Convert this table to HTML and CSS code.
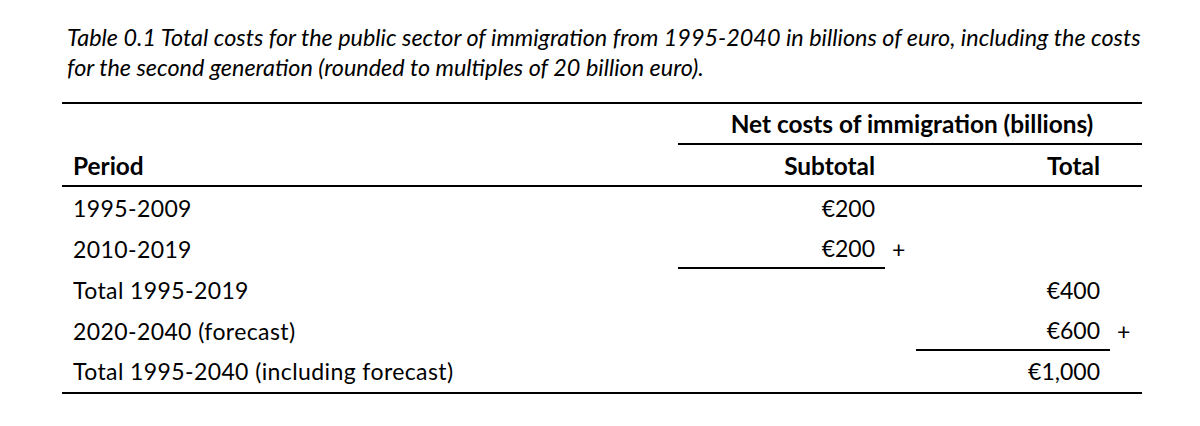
FILE: index.html
```html
<!DOCTYPE html>
<html lang="en">
<head>
<meta charset="utf-8">
<title>Table 0.1</title>
<link rel="stylesheet" href="styles.css">
</head>
<body>
<div class="page">
  <p class="caption">Table 0.1 Total costs for the public sector of immigration from 1995-2040 in billions of euro, including the costs for the second generation (rounded to multiples of 20 billion euro).</p>
  <div class="table">
    <div class="cell blank"></div>
    <div class="cell group">Net costs of immigration (billions)</div>

    <div class="cell head label">Period</div>
    <div class="cell head num">Subtotal</div>
    <div class="cell head"></div>
    <div class="cell head num">Total</div>
    <div class="cell head"></div>

    <div class="cell label">1995-2009</div>
    <div class="cell num">€200</div>
    <div class="cell"></div>
    <div class="cell num"></div>
    <div class="cell"></div>

    <div class="cell label">2010-2019</div>
    <div class="cell num rule">€200</div>
    <div class="cell plus">+</div>
    <div class="cell num"></div>
    <div class="cell"></div>

    <div class="cell label">Total 1995-2019</div>
    <div class="cell num"></div>
    <div class="cell"></div>
    <div class="cell num">€400</div>
    <div class="cell"></div>

    <div class="cell label">2020-2040 (forecast)</div>
    <div class="cell num"></div>
    <div class="cell"></div>
    <div class="cell num rule">€600</div>
    <div class="cell plus">+</div>

    <div class="cell label last">Total 1995-2040 (including forecast)</div>
    <div class="cell num last"></div>
    <div class="cell last"></div>
    <div class="cell num last">€1,000</div>
    <div class="cell last"></div>
  </div>
</div>
</body>
</html>
```
FILE: styles.css
```css
html, body {
  margin: 0;
  padding: 0;
  background: #ffffff;
}

body {
  width: 1200px;
  height: 426px;
  overflow: hidden;
  font-family: Lato, "Open Sans", sans-serif;
  color: #000000;
}

.page {
  padding: 22px 0 0 62px;
}

.caption {
  margin: 0 0 20px 5px;
  width: 1078px;
  font-style: italic;
  font-size: 23.4px;
  line-height: 30px;
}

.table {
  display: grid;
  width: 1080px;
  grid-template-columns: 616px 207px 31px 194px 32px;
  grid-template-rows: 41px 42px 41px 41px 41px 41px 41px;
  border-top: 2px solid #000;
  border-bottom: 2px solid #000;
  font-size: 23px;
}

.cell {
  display: flex;
  align-items: center;
  box-sizing: border-box;
}

.group {
  grid-column: 2 / 6;
  justify-content: center;
  font-weight: 700;
  font-size: 24.4px;
  border-bottom: 2px solid #000;
  padding-left: 4px;
}

.head {
  font-weight: 700;
  font-size: 24.4px;
  border-bottom: 2px solid #000;
}

.label {
  padding-left: 11px;
  letter-spacing: 0.4px;
}

.head.label {
  letter-spacing: 0;
}

.num {
  justify-content: flex-end;
  padding-right: 10px;
}

.rule {
  border-bottom: 2px solid #000;
}

.plus {
  padding-left: 7px;
  align-self: start;
  height: 41px;
}

.last {
  height: 39px;
}
```
